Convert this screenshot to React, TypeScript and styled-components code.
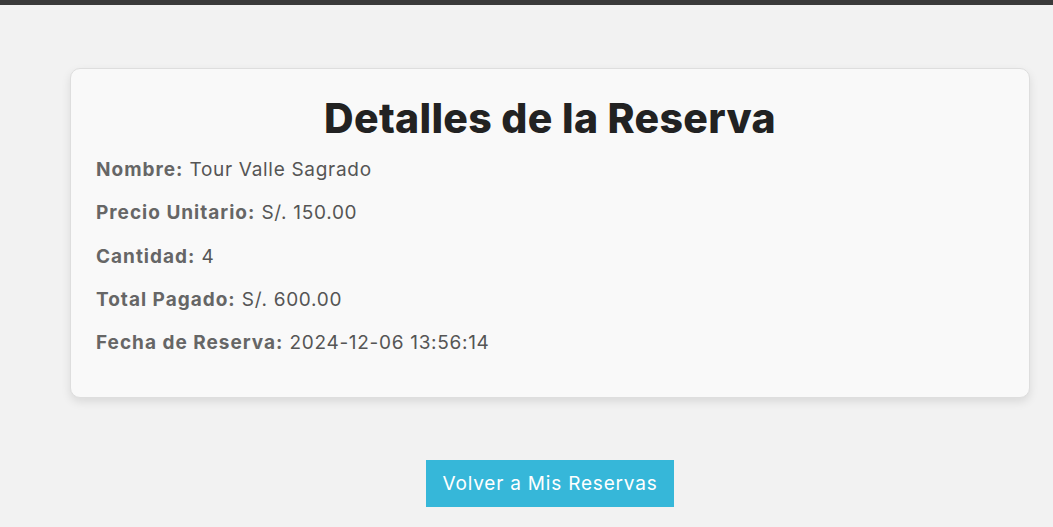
import React from "react";
import styled, { createGlobalStyle } from "styled-components";

const Global = createGlobalStyle`
  html, body { margin: 0; padding: 0; background: #f2f2f2; }
  body { font-family: "Inter", "Liberation Sans", sans-serif; }
`;

const TopBar = styled.div`
  height: 5px;
  background: #3a3a3a;
`;

const Main = styled.main`
  padding: 63px 24px 0 70px;
  display: flex;
  flex-direction: column;
  align-items: flex-start;
`;

const Card = styled.section`
  box-sizing: border-box;
  width: 960px;
  background: #f9f9f9;
  border: 1px solid #dedede;
  border-radius: 10px;
  box-shadow: 0 4px 10px rgba(0, 0, 0, 0.1);
  padding: 22px 25px 33px;
`;

const Title = styled.h1`
  margin: 0 0 3px;
  text-align: center;
  font-size: 41px;
  letter-spacing: 0.3px;
  font-weight: 800;
  color: #222;
  line-height: 54px;
`;

const Row = styled.p`
  margin: 0;
  font-size: 19px;
  letter-spacing: 0.7px;
  line-height: 43.3px;
  color: #555;
  font-weight: 400;
`;

const Label = styled.strong`
  color: #666;
  font-weight: 700;
  letter-spacing: 1px;
`;

const ButtonWrap = styled.div`
  width: 960px;
  display: flex;
  justify-content: center;
  margin-top: 62px;
`;

const Button = styled.button`
  width: 248px;
  height: 47px;
  border: none;
  background: #36b7d9;
  color: #fff;
  font-family: inherit;
  font-size: 19px;
  letter-spacing: 0.8px;
  cursor: pointer;
`;

const rows: [string, string][] = [
  ["Nombre:", "Tour Valle Sagrado"],
  ["Precio Unitario:", "S/. 150.00"],
  ["Cantidad:", "4"],
  ["Total Pagado:", "S/. 600.00"],
  ["Fecha de Reserva:", "2024-12-06 13:56:14"],
];

export default function App() {
  return (
    <>
      <Global />
      <TopBar />
      <Main>
        <Card>
          <Title>Detalles de la Reserva</Title>
          {rows.map(([k, v]) => (
            <Row key={k}>
              <Label>{k}</Label> {v}
            </Row>
          ))}
        </Card>
        <ButtonWrap>
          <Button>Volver a Mis Reservas</Button>
        </ButtonWrap>
      </Main>
    </>
  );
}
